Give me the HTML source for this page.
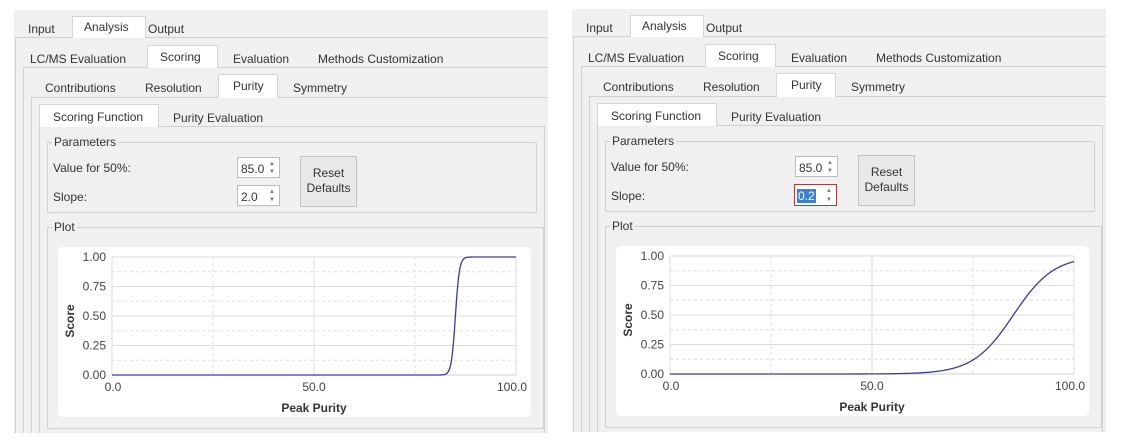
<!DOCTYPE html>
<html><head><meta charset="utf-8">
<style>
*{box-sizing:border-box;margin:0;padding:0}
body{width:1132px;height:443px;background:#fff;position:relative;overflow:hidden;font-family:"Liberation Sans",sans-serif;font-size:12px;color:#333}
.panel{position:absolute;width:534px;height:423px;background:#f0f0f0;overflow:hidden}
.a{position:absolute}
.t{position:absolute;white-space:nowrap;line-height:14px}
.tab{position:absolute;background:#fff;border:1px solid #d6d6d6;border-bottom:none}
.pane{position:absolute;border:1px solid #d0d0d0;right:-2px;bottom:-2px}
.grp{position:absolute;border:1px solid #cfcfcf;border-radius:2px}
.gt{position:absolute;background:#f0f0f0;padding:0 2px;line-height:12px}
.spin{position:absolute;background:#fff;border:1px solid #bcbcbc;width:43px}
.spin span{position:absolute;left:3px;top:4px}
.arr{position:absolute;right:4px;font-size:6px;color:#777;line-height:6px}
.btn{position:absolute;background:#e8e8e8;border:1px solid #c4c4c4;text-align:center;line-height:15px;padding-top:9px}
</style></head><body>
<div id="p1" class="panel" style="left:14px;top:10px"></div>
<div id="p2" class="panel" style="left:572px;top:9px"></div>
<script>
function panel(slope,right){
 let h='';
 h+='<div class="pane" style="left:1px;top:27px"></div>';
 h+='<div class="tab" style="left:58px;top:6px;width:74px;height:22px"></div>';
 h+='<div class="t" style="left:14px;top:12px">Input</div><div class="t" style="left:70px;top:10px">Analysis</div><div class="t" style="left:134px;top:12px">Output</div>';
 h+='<div class="pane" style="left:9px;top:57px"></div>';
 h+='<div class="tab" style="left:133px;top:35px;width:71px;height:23px"></div>';
 h+='<div class="t" style="left:16px;top:42px">LC/MS Evaluation</div><div class="t" style="left:146px;top:40px">Scoring</div><div class="t" style="left:219px;top:42px">Evaluation</div><div class="t" style="left:304px;top:42px">Methods Customization</div>';
 h+='<div class="pane" style="left:17px;top:87px"></div>';
 h+='<div class="tab" style="left:204px;top:64px;width:60px;height:24px"></div>';
 h+='<div class="t" style="left:31px;top:71px">Contributions</div><div class="t" style="left:131px;top:71px">Resolution</div><div class="t" style="left:219px;top:69px">Purity</div><div class="t" style="left:279px;top:71px">Symmetry</div>';
 h+='<div class="pane" style="left:25px;top:116px;right:3px"></div>';
 h+='<div class="tab" style="left:25px;top:94px;width:120px;height:23px"></div>';
 h+='<div class="t" style="left:39px;top:100px">Scoring Function</div><div class="t" style="left:159px;top:101px">Purity Evaluation</div>';
 h+='<div class="grp" style="left:33px;top:132px;width:490px;height:71px"></div><div class="gt" style="left:38px;top:126px">Parameters</div>';
 h+='<div class="t" style="left:39px;top:151px">Value for 50%:</div><div class="t" style="left:39px;top:180px">Slope:</div>';
 h+='<div class="spin" style="left:223px;top:147px;height:21px"><span>85.0</span><div class="arr" style="top:3px">▲</div><div class="arr" style="top:11px">▼</div></div>';
 if(right) h+='<div class="spin" style="left:222px;top:175px;height:22px;border-color:#b03a3a"><span style="background:#3b7fd8;color:#fff;padding:0 1px;left:2px">0.2</span><div class="arr" style="top:3px">▲</div><div class="arr" style="top:12px">▼</div></div>';
 else h+='<div class="spin" style="left:223px;top:175px;height:21px"><span>2.0</span><div class="arr" style="top:3px">▲</div><div class="arr" style="top:11px">▼</div></div>';
 h+='<div class="btn" style="left:286px;top:146px;width:57px;height:51px">Reset<br>Defaults</div>';
 h+='<div class="grp" style="left:33px;top:217px;width:497px;height:202px"></div><div class="gt" style="left:38px;top:211px">Plot</div>';
 h+='<div class="a" style="left:44px;top:237px;width:473px;height:170px;background:#fff;border-radius:5px"></div>';
 const X0=98,X1=502,Y0=365,Y1=247,W=X1-X0,H=Y0-Y1;
 let s='<svg class="a" style="left:0;top:0" width="534" height="423" font-family="Liberation Sans, sans-serif" font-size="12">';
 for(let i=1;i<8;i+=2){let y=Y0-H*i/8;s+=`<line x1="${X0}" x2="${X1}" y1="${y}" y2="${y}" stroke="#ddd" stroke-dasharray="3,3"/>`;}
 for(let i=1;i<4;i++){let y=Y0-H*i/4;s+=`<line x1="${X0}" x2="${X1}" y1="${y}" y2="${y}" stroke="#ddd"/>`;}
 s+=`<line x1="${X0}" x2="${X1}" y1="${Y1}" y2="${Y1}" stroke="#ddd"/>`;
 [0.25,0.75].forEach(f=>{let x=X0+W*f;s+=`<line x1="${x}" x2="${x}" y1="${Y1}" y2="${Y0}" stroke="#ddd" stroke-dasharray="3,3"/>`;});
 [0,0.5,1].forEach(f=>{let x=X0+W*f;s+=`<line x1="${x}" x2="${x}" y1="${Y1}" y2="${Y0}" stroke="#ddd"/>`;});
 s+=`<line x1="${X0}" x2="${X1}" y1="${Y0}" y2="${Y0}" stroke="#ccc"/>`;
 ['0.00','0.25','0.50','0.75','1.00'].forEach((l,i)=>{s+=`<text x="${X0-6}" y="${Y0-H*i/4+4}" text-anchor="end" fill="#444">${l}</text>`;});
 s+=`<text x="${X0+1}" y="381" text-anchor="middle" fill="#444">0.0</text><text x="${X0+W/2}" y="381" text-anchor="middle" fill="#444">50.0</text><text x="${X1-4}" y="381" text-anchor="middle" fill="#444">100.0</text>`;
 s+=`<text x="${X0+W/2}" y="402" text-anchor="middle" font-weight="bold" fill="#333">Peak Purity</text>`;
 s+=`<text transform="translate(60,311) rotate(-90)" text-anchor="middle" font-weight="bold" fill="#333">Score</text>`;
 let d='';for(let i=0;i<=800;i++){let x=i/8;let v=1/(1+Math.exp(-slope*(x-85)));d+=(i?'L':'M')+(X0+W*x/100).toFixed(2)+','+(Y0-H*v).toFixed(2);}
 s+=`<path d="${d}" fill="none" stroke="#3a3aa0" stroke-width="1.3"/>`;
 s+='</svg>';
 return h+s;
}
document.getElementById('p1').innerHTML=panel(2,false);
document.getElementById('p2').innerHTML=panel(0.2,true);
</script>
</body></html>
